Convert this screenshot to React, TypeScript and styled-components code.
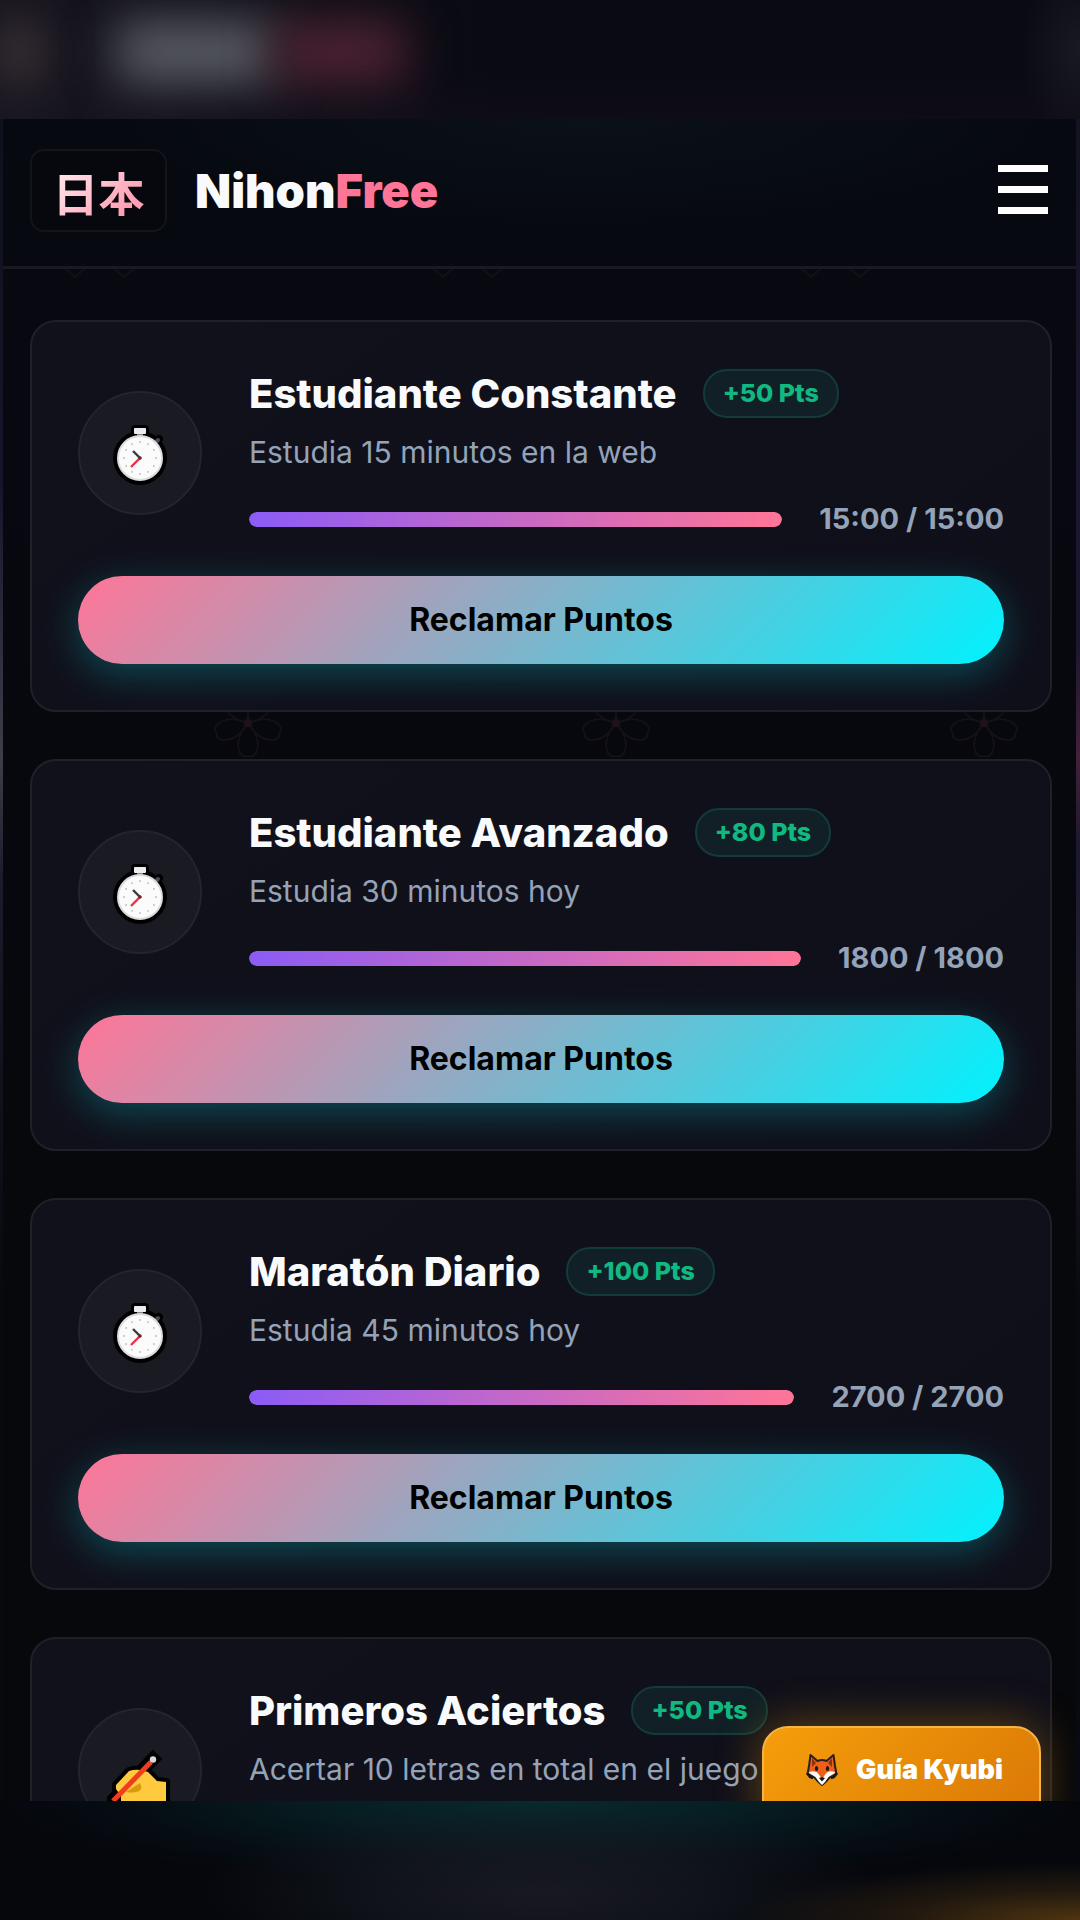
import React from 'react';
import styled, { createGlobalStyle } from 'styled-components';

const GlobalStyle = createGlobalStyle`
  *, *::before, *::after { box-sizing: border-box; }
  body {
    margin: 0;
    background: #090a10;
    color: #f8fafc;
    font-family: Inter, "Liberation Sans", "Noto Sans CJK JP", sans-serif;
  }
  h1, h2, p { margin: 0; }
`;

const Backdrop = styled.div`
  display: grid;
  grid-template-rows: 119px minmax(0, 1fr) 119px;
  height: 100vh;
  overflow: hidden;
  background:
    linear-gradient(180deg, #11111d 119px, #15152a 480px, #3e3e4a 760px, #1b1b2a 880px, #08080e 1300px) left / 4px 100% no-repeat,
    linear-gradient(180deg, #131220 119px, #1c1730 480px, #1b1630 640px, #43213a 755px, #1c1730 850px, #242130 1000px, #090911 1300px) right / 4px 100% no-repeat,
    #08080f;
`;

const TopGlow = styled.div`
  display: flex;
  align-items: center;
  overflow: hidden;
  background:
    radial-gradient(ellipse 60px 90px at 100% 50px, rgba(40, 40, 48, 0.5), transparent),
    linear-gradient(90deg, rgba(28, 26, 36, 0.7), transparent 46%),
    linear-gradient(180deg, #090a12, #0a0a13 60%, #0e0d17);
`;

const Haze = styled.span<{ $width: number; $color: string; $space?: number }>`
  flex: none;
  width: ${(p) => p.$width}px;
  height: 62px;
  margin: 0 ${(p) => p.$space ?? 0}px 16px 0;
  background: ${(p) => p.$color};
  filter: blur(24px);
`;

const BottomGlow = styled.div`
  background:
    radial-gradient(ellipse 340px 58px at 100% 100%, rgba(92, 60, 16, 0.85), rgba(58, 40, 16, 0.55) 50%, transparent),
    radial-gradient(ellipse 340px 90px at 50% 76%, rgba(27, 28, 37, 0.85), rgba(24, 26, 34, 0.6) 50%, transparent),
    radial-gradient(ellipse 540px 84px at 50% 0, rgba(8, 44, 48, 0.95), rgba(7, 36, 40, 0.75) 40%, rgba(5, 22, 27, 0.45) 75%, transparent),
    #05070d;
`;

const Screen = styled.div`
  position: relative;
  margin: 0 4px 0 3px;
  overflow: hidden;
  background: linear-gradient(180deg, #080911, #07080d 50%, #07080b);
`;

const Pattern = styled.svg`
  position: absolute;
  inset: 0;
  width: 100%;
  height: 100%;
`;

const Header = styled.header`
  position: relative;
  display: flex;
  align-items: center;
  justify-content: space-between;
  height: 150px;
  padding: 0 28px 4px 27px;
  border-bottom: 3px solid #191a21;
  background: radial-gradient(ellipse 480px 110px at 54% 0, #0b1119, #060910);
`;

const Brand = styled.a`
  display: flex;
  align-items: center;
  gap: 28px;
  color: inherit;
  text-decoration: none;
`;

const Seal = styled.span`
  display: grid;
  place-items: center;
  width: 137px;
  height: 83px;
  border: 2px solid #14151b;
  border-radius: 14px;
  background: #07080d;
`;

const SealText = styled.span`
  font: 700 46px/60px "Noto Sans CJK JP", sans-serif;
  background: linear-gradient(135deg, #ffe9ed 10%, #ff9fb4 80%);
  background-clip: text;
  color: transparent;
`;

const Wordmark = styled.span`
  font-size: 47px;
  font-weight: 900;
  line-height: 60px;
`;

const Accent = styled.span`
  color: #ff7597;
`;

const MenuButton = styled.button`
  display: flex;
  flex-direction: column;
  gap: 14px;
  width: 50px;
  padding: 0 0 2px;
  border: 0;
  background: none;
`;

const MenuBar = styled.span`
  height: 7px;
  background: #ffffff;
`;

const Missions = styled.main`
  position: relative;
  display: flex;
  flex-direction: column;
  gap: 47px;
  padding: 51px 24px 51px 27px;
`;

const Card = styled.article`
  flex: none;
  padding: 45px 46px 46px;
  border: 2px solid #202029;
  border-radius: 26px;
  background: linear-gradient(145deg, #11111b, #0f0f19);
`;

const Summary = styled.div`
  display: flex;
  align-items: center;
  gap: 47px;
  margin-bottom: 38px;
`;

const IconDisc = styled.div`
  display: grid;
  place-items: center;
  flex: none;
  width: 124px;
  height: 124px;
  border: 2px solid #24242d;
  border-radius: 50%;
  background: #1a1a23;
`;

const Details = styled.div`
  flex: 1;
  min-width: 0;
  min-height: 171px;
`;

const TitleRow = styled.div`
  display: flex;
  align-items: center;
  gap: 26px;
  height: 53px;
  margin-bottom: 12px;
`;

const Title = styled.h2`
  font-size: 40px;
  font-weight: 800;
  line-height: 52px;
`;

const Points = styled.span`
  padding: 0 18px;
  border: 2px solid #123c35;
  border-radius: 24px;
  background: #102026;
  color: #10b981;
  font-size: 25px;
  font-weight: 800;
  line-height: 45px;
`;

const Description = styled.p`
  margin-bottom: 28px;
  color: #94a3b8;
  font-size: 30px;
  line-height: 40px;
  white-space: nowrap;
`;

const ProgressRow = styled.div`
  display: flex;
  align-items: center;
  gap: 37px;
  height: 38px;
`;

const Progress = styled.progress`
  appearance: none;
  flex: 1;
  min-width: 0;
  height: 15px;
  border: 0;
  border-radius: 8px;
  overflow: hidden;
  &::-webkit-progress-bar { background: #1a1a23; }
  &::-webkit-progress-value {
    border-radius: 8px;
    background: linear-gradient(90deg, #8b5cf6, #ff7597);
  }
`;

const Amount = styled.span`
  color: #94a3b8;
  font-size: 29px;
  font-weight: 700;
  line-height: 38px;
`;

const ClaimButton = styled.button`
  display: block;
  width: 100%;
  height: 88px;
  padding: 0;
  border: 0;
  border-radius: 44px;
  background: linear-gradient(135deg, #ff7597, #00f2fe);
  box-shadow: 0 10px 38px rgba(0, 242, 254, 0.26);
  color: #000000;
  font: 700 32px/40px Inter, "Liberation Sans", sans-serif;
`;

const GuideButton = styled.button`
  position: absolute;
  right: 35px;
  bottom: -30px;
  display: flex;
  align-items: flex-start;
  gap: 18px;
  height: 105px;
  padding: 24px 36px 0 42px;
  border: 2px solid #f5b447;
  border-radius: 26px;
  background: linear-gradient(135deg, #f59e0b, #d97706);
  box-shadow: 0 0 46px rgba(245, 158, 11, 0.38);
  color: #ffffff;
  font: 900 27px/36px Inter, "Liberation Sans", sans-serif;
`;

const ticks = Array.from({ length: 12 }, (_, i) => (i * Math.PI) / 6);

function Stopwatch() {
  return (
    <svg width="60" height="70" viewBox="0 0 60 70" aria-hidden="true">
      <g fill="#000" stroke="#000" strokeWidth="8" strokeLinejoin="round" strokeLinecap="round">
        <circle cx="30" cy="40" r="23" />
        <path d="M25 11h10v8H25zM46 24l3-3" />
      </g>
      <path d="M27 14h6v5h-6z" fill="#88888c" />
      <rect x="24" y="10" width="12" height="6" rx="1" fill="#ececee" />
      <path d="M46 24l2-2" stroke="#4c4e54" strokeWidth="4" strokeLinecap="round" />
      <circle cx="30" cy="40" r="22" fill="#fbfbfb" stroke="#dcdcde" strokeWidth="2" />
      {ticks.map((a) => (
        <circle key={a} cx={30 + 16 * Math.sin(a)} cy={40 - 16 * Math.cos(a)} r="0.9" fill="#b9bbc0" />
      ))}
      <path d="M30 40l-7-7" stroke="#363b42" strokeWidth="2.4" />
      <path d="M30 40l-9 9" stroke="#ed3048" strokeWidth="2.4" />
      <circle cx="30" cy="40" r="1.8" fill="#6e2530" />
    </svg>
  );
}

function WritingHand() {
  const hand = 'M9 47L22 33q9-3 19 1l9 9 9 1v20H14v-6l-5-7z';
  return (
    <svg width="66" height="64" viewBox="0 0 66 64" aria-hidden="true">
      <path d={hand} stroke="#000" strokeWidth="8" strokeLinejoin="round" />
      <path d="M7 61L46 21" stroke="#000" strokeWidth="13" strokeLinecap="square" />
      <path d={hand} fill="#ffca3d" />
      <path d="M19 54l14-9q4 8-4 9-5 1-10 0z" fill="#d79a0b" />
      <path d="M6 63L44 24" stroke="#f23c1e" strokeWidth="5" />
      <circle cx="46" cy="21.5" r="3.2" fill="#d8d8dc" />
    </svg>
  );
}

function Fox() {
  const head = 'M4.5 3l7 6q4.500-2 9 0l7-6 1.500 11 1.500 8-7 3.500-4 4.500-3.500 3-3.500-3-4-4.500-7-3.500L3 14z';
  return (
    <svg width="32" height="36" viewBox="0 0 32 36" aria-hidden="true">
      <path d={head} fill="#ee5f18" stroke="#28201c" strokeWidth="2" strokeLinejoin="round" />
      <path d="M6 6l4 5-4 4zM26 6l-4 5 4 4z" fill="#8b3310" />
      <path d="M2.500 20.500q7-3 10 1.500l3.500 5 3.500-5q3-4.500 10-1.500l-7 4.500-3.500 5-3 3-3-3-3.500-5z" fill="#fff" />
      <ellipse cx="10.500" cy="16.500" rx="1.700" ry="2.600" fill="#25160f" />
      <ellipse cx="21.500" cy="16.500" rx="1.700" ry="2.600" fill="#25160f" />
      <path d="M13 26q3-1.500 6 0l-3 3.500z" fill="#17181b" />
      <path d="M1 21l3 4 3 1M31 21l-3 4-3 1" fill="none" stroke="#17181b" strokeWidth="2.600" />
    </svg>
  );
}

function Blossoms() {
  return (
    <Pattern aria-hidden="true">
      <defs>
        <pattern id="blossoms" width="368" height="1700" patternUnits="userSpaceOnUse">
          <g fill="none" stroke="#151116" strokeWidth="1.500">
            <path d="M58 146l14 12 14-12M107 146l14 12 14-12" />
            <g transform="translate(245 604)">
              {[0, 72, 144, 216, 288].map((angle) => (
                <path key={angle} transform={`rotate(${angle})`} d="M0 0q-14 16-8 30q3 5 8 3q5 2 8-3q6-14-8-30" />
              ))}
            </g>
          </g>
          <circle cx="245" cy="604" r="4" fill="#201218" />
        </pattern>
      </defs>
      <rect width="100%" height="100%" fill="url(#blossoms)" />
    </Pattern>
  );
}

interface Mission {
  title: string;
  points: number;
  description: string;
  progress?: string;
  icon: 'watch' | 'hand';
}

const missions: Mission[] = [
  { title: 'Estudiante Constante', points: 50, description: 'Estudia 15 minutos en la web', progress: '15:00 / 15:00', icon: 'watch' },
  { title: 'Estudiante Avanzado', points: 80, description: 'Estudia 30 minutos hoy', progress: '1800 / 1800', icon: 'watch' },
  { title: 'Maratón Diario', points: 100, description: 'Estudia 45 minutos hoy', progress: '2700 / 2700', icon: 'watch' },
  { title: 'Primeros Aciertos', points: 50, description: 'Acertar 10 letras en total en el juego', icon: 'hand' },
];

function MissionCard({ mission }: { mission: Mission }) {
  return (
    <Card>
      <Summary>
        <IconDisc>{mission.icon === 'watch' ? <Stopwatch /> : <WritingHand />}</IconDisc>
        <Details>
          <TitleRow>
            <Title>{mission.title}</Title>
            <Points>+{mission.points} Pts</Points>
          </TitleRow>
          <Description>{mission.description}</Description>
          {mission.progress && (
            <ProgressRow>
              <Progress max={100} value={100} aria-label={mission.title} />
              <Amount>{mission.progress}</Amount>
            </ProgressRow>
          )}
        </Details>
      </Summary>
      {mission.progress && <ClaimButton type="button">Reclamar Puntos</ClaimButton>}
    </Card>
  );
}

export default function App() {
  return (
    <>
      <GlobalStyle />
      <Backdrop>
        <TopGlow>
          <Haze $width={40} $color="#46383d" $space={76} />
          <Haze $width={160} $color="#5a5c65" />
          <Haze $width={130} $color="#4e2233" />
        </TopGlow>
        <Screen>
          <Blossoms />
          <Header>
            <Brand href="#">
              <Seal>
                <SealText lang="ja">日本</SealText>
              </Seal>
              <Wordmark>
                Nihon<Accent>Free</Accent>
              </Wordmark>
            </Brand>
            <MenuButton type="button" aria-label="Menú">
              <MenuBar />
              <MenuBar />
              <MenuBar />
            </MenuButton>
          </Header>
          <Missions>
            {missions.map((mission) => (
              <MissionCard key={mission.title} mission={mission} />
            ))}
          </Missions>
          <GuideButton type="button">
            <Fox />
            Guía Kyubi
          </GuideButton>
        </Screen>
        <BottomGlow />
      </Backdrop>
    </>
  );
}
